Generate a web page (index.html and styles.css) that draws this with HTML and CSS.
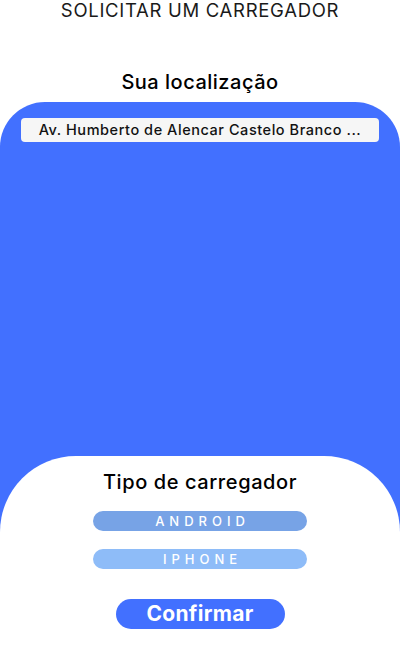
FILE: index.html
```html
<!DOCTYPE html>
<html lang="pt-BR">
<head>
<meta charset="utf-8">
<title>Solicitar um carregador</title>
<link rel="stylesheet" href="styles.css">
</head>
<body>
  <main class="screen">
    <h1 class="page-title">SOLICITAR UM CARREGADOR</h1>
    <h2 class="section-title">Sua localização</h2>
    <section class="map">
      <div class="address">Av. Humberto de Alencar Castelo Branco ...</div>
      <div class="sheet">
        <h2 class="sheet-title">Tipo de carregador</h2>
        <button class="option option-android">ANDROID</button>
        <button class="option option-iphone">IPHONE</button>
        <button class="confirm">Confirmar</button>
      </div>
    </section>
  </main>
</body>
</html>
```

FILE: styles.css
```css
* { box-sizing: border-box; }
html, body { margin: 0; padding: 0; background: #ffffff; }
body { font-family: Inter, "Noto Sans", sans-serif; color: #000; }
.screen { width: 400px; height: 653px; display: flex; flex-direction: column; overflow: hidden; }
.page-title {
  margin: 0;
  font-size: 18.5px;
  line-height: 20px;
  font-weight: 400;
  color: #1a1a1a;
  text-align: center;
  letter-spacing: 0.7px;
}
.section-title {
  margin: 50px 0 8px;
  font-size: 20px;
  line-height: 24px;
  font-weight: 500;
  text-align: center;
  letter-spacing: 0.5px;
}
.map {
  flex: 1;
  display: flex;
  flex-direction: column;
  background: #4270ff;
  border-radius: 45px 45px 0 0;
  padding-top: 16px;
}
.address {
  margin: 0 21px;
  height: 24px;
  line-height: 24px;
  background: #f6f6f6;
  border-radius: 4px;
  font-size: 14.5px;
  font-weight: 500;
  text-align: center;
  color: #111;
  letter-spacing: 0.55px;
}
.sheet {
  margin-top: auto;
  height: 197px;
  background: #ffffff;
  border-radius: 76px 76px 0 0;
  padding-top: 14px;
  display: flex;
  flex-direction: column;
  align-items: center;
}
.sheet-title {
  margin: 0;
  font-size: 20px;
  line-height: 24px;
  font-weight: 500;
  letter-spacing: 0.6px;
}
.option {
  width: 214px;
  height: 20px;
  border: 0;
  border-radius: 10px;
  color: #fff;
  font-family: inherit;
  font-size: 13px;
  font-weight: 500;
  letter-spacing: 5px;
  padding: 0 0 0 5px;
  line-height: 20px;
}
.option-android { background: #77a3e6; margin-top: 17px; }
.option-iphone { background: #8ebcf8; margin-top: 18px; }
.confirm {
  margin-top: 30px;
  width: 169px;
  height: 30px;
  border: 0;
  border-radius: 15px;
  background: #4270ff;
  color: #fff;
  font-family: inherit;
  font-size: 21px;
  font-weight: 700;
  line-height: 30px;
  letter-spacing: 0.3px;
  padding: 0;
}
```
